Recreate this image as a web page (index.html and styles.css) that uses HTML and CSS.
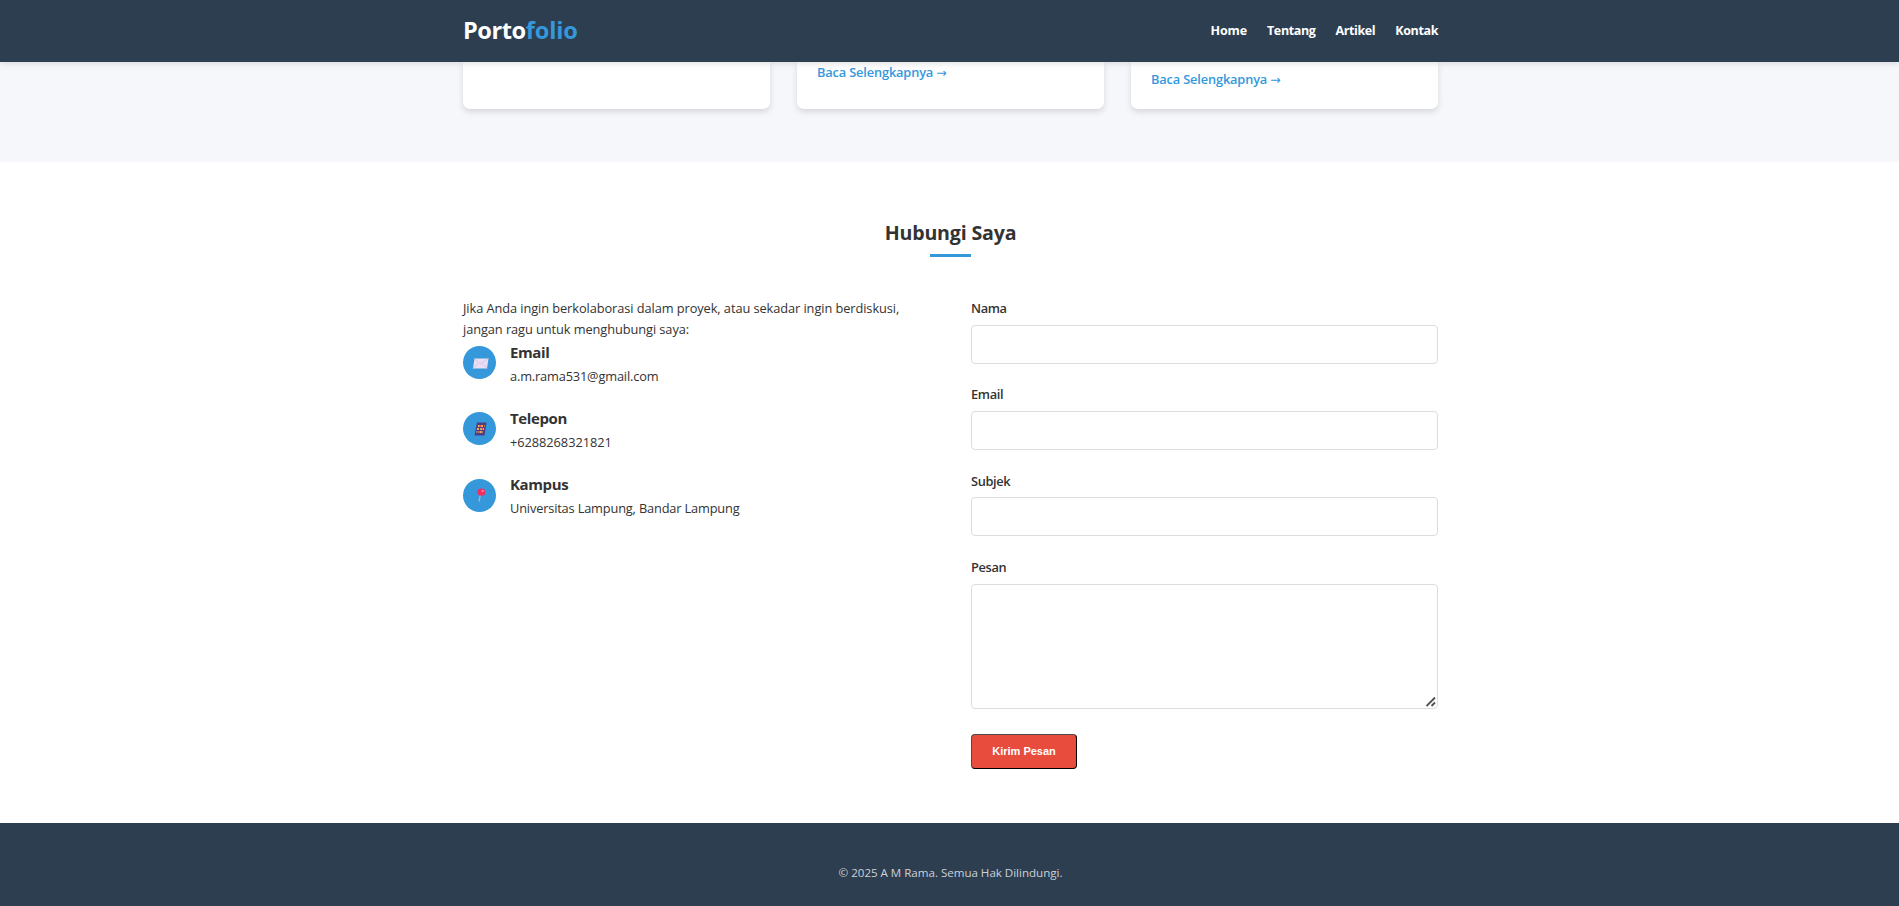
FILE: index.html
```html
<!DOCTYPE html>
<html lang="id">
<head>
<meta charset="utf-8">
<title>Portofolio</title>
<link rel="stylesheet" href="styles.css">
</head>
<body>
<header class="header">
  <div class="container header-inner">
    <a class="logo">Porto<span class="accent">folio</span></a>
    <nav class="nav"><a class="nav-home">Home</a><a>Tentang</a><a>Artikel</a><a>Kontak</a></nav>
  </div>
</header>
<section class="articles">
  <div class="container cards">
    <article class="card"></article>
    <article class="card"><a class="more">Baca Selengkapnya <span class="arrow">→</span></a></article>
    <article class="card card-low"><a class="more">Baca Selengkapnya <span class="arrow">→</span></a></article>
  </div>
</section>
<section class="contact">
  <div class="container">
    <h2 class="title">Hubungi Saya</h2>
    <div class="columns">
      <div class="info">
        <p class="intro">Jika Anda ingin berkolaborasi dalam proyek, atau sekadar ingin berdiskusi,<br>jangan ragu untuk menghubungi saya:</p>
        <div class="item">
          <div class="badge"><svg width="18" height="14" viewBox="0 0 18 14"><path d="M3.500 2.500H17.500L16 12.500H2Z" fill="#e9def3"/><path d="M3.500 2.500L9 8L17.500 2.500M2 12.500L7 7.500M16 12.500L11.500 7.500" fill="none" stroke="#cfc0df" stroke-width=".7"/></svg></div>
          <div><h3>Email</h3><p>a.m.rama531@gmail.com</p></div>
        </div>
        <div class="item">
          <div class="badge"><svg width="18" height="14" viewBox="0 0 18 14"><path d="M6 0.500H15.500L13.500 13.500H3.500Z" fill="#533b86"/><path d="M7 4H13.500M6 7H13M5.500 10H12" stroke="#f0b04a" stroke-width="1.800" stroke-dasharray="2 1"/><path d="M8.500 4h1.500M11 7h1M6 10h1" stroke="#e8433f" stroke-width="1.800"/><path d="M9.500 7h1M10 10h1" stroke="#5fb0e8" stroke-width="1.800"/></svg></div>
          <div><h3>Telepon</h3><p class="phone">+6288268321821</p></div>
        </div>
        <div class="item">
          <div class="badge"><svg width="18" height="14" viewBox="0 0 18 14"><path d="M9.300 7L8 13.500" stroke="#a9b4c4" stroke-width="1.300"/><ellipse cx="10.300" cy="4.200" rx="4" ry="3.600" fill="#ee2f63"/><circle cx="11.700" cy="3" r="1.100" fill="#ff8fb0"/></svg></div>
          <div><h3>Kampus</h3><p>Universitas Lampung, Bandar Lampung</p></div>
        </div>
      </div>
      <form class="form">
        <div class="field"><label for="nama">Nama</label><input id="nama" type="text"></div>
        <div class="field"><label for="email">Email</label><input id="email" type="text"></div>
        <div class="field"><label for="subjek">Subjek</label><input id="subjek" type="text"></div>
        <div class="field message"><label for="pesan">Pesan</label><textarea id="pesan"></textarea>
          <svg class="grip" width="10" height="10" viewBox="0 0 10 10"><path d="M.5 9L9 .5M5.500 9L9 5.500" stroke="#505050" stroke-width="1.900"/></svg></div>
        <button type="button" class="send">Kirim Pesan</button>
      </form>
    </div>
  </div>
</section>
<footer class="footer">© 2025 A M Rama. Semua Hak Dilindungi.</footer>
</body>
</html>
```
FILE: styles.css
```css
* { box-sizing: border-box; margin: 0; padding: 0; }
body { font-family: "Open Sans", "Noto Sans", sans-serif; font-size: 12.8px; line-height: 21.33px; color: #333; background: #fff; height: 906px; overflow: hidden; display: flex; flex-direction: column; }
.container { width: 975px; margin-left: 463px; }
.header { height: 62px; flex: none; background: #2d3e50; position: relative; z-index: 2; box-shadow: 0 1px 7px rgba(0,0,0,.14); }
.header-inner { height: 62px; display: flex; align-items: center; justify-content: space-between; }
.logo { font-size: 23.600px; font-weight: 700; color: #fff; line-height: 38px; letter-spacing: -.45px; padding-bottom: 2px; }
.accent { color: #3498db; letter-spacing: -.15px; }
.nav { display: flex; gap: 20px; color: #fff; font-weight: 700; font-size: 12.500px; letter-spacing: -.38px; }
.nav-home { letter-spacing: -.1px; }
.articles { height: 100px; flex: none; background: #f5f7fb; }
.cards { display: grid; grid-template-columns: repeat(3, 307px); gap: 27px; }
.card { height: 47px; background: #fff; border-radius: 0 0 7px 7px; padding-left: 20px; box-shadow: 0 3px 6px rgba(0,0,0,.13); }
.more { display: block; color: #3498db; font-weight: 600; letter-spacing: -.15px; }
.arrow { font: 12.500px/1 "DejaVu Sans", sans-serif; }
.card-low { padding-top: 7px; }
.contact { height: 661px; flex: none; padding-top: 54px; }
.title { font-size: 19.600px; line-height: 34px; font-weight: 700; text-align: center; letter-spacing: -.17px; }
.title::after { content: ""; display: block; width: 41px; height: 3px; margin: 4px auto 0; background: #3498db; }
.columns { display: grid; grid-template-columns: 467px 467px; gap: 41px; margin-top: 41px; }
.intro { letter-spacing: -.075px; }
.item { display: flex; gap: 14px; height: 66.200px; }
.badge { width: 33px; height: 33px; border-radius: 50%; background: #3498db; display: flex; align-items: center; justify-content: center; margin-top: 5.500px; }
.item h3 { font-size: 15px; line-height: 22px; font-weight: 700; letter-spacing: -.38px; }
.item p { margin-top: 3px; letter-spacing: -.165px; }
.item .phone { letter-spacing: -.05px; }
.field { margin-bottom: 20.630px; }
.field label { display: block; font-weight: 600; line-height: 21px; margin-bottom: 5.700px; letter-spacing: -.36px; }
.field input, .field textarea { display: block; width: 467px; height: 39px; border: 1px solid #ddd; border-radius: 4px; background: #fff; }
.field textarea { height: 125px; resize: none; }
.message { position: relative; margin-bottom: 25px; }
.grip { position: absolute; right: 2px; bottom: 2px; }
.send { display: block; width: 106px; height: 35px; border: 1px solid; border-color: #4c4c4c #000 #000 #4c4c4c; border-radius: 4px; background: #e74c3c; color: #fff; font: 700 11px "Liberation Sans", Arial, sans-serif; }
.footer { flex: 1; background: #2d3e50; color: #ccd1d6; text-align: center; padding: 39px 0 0 2px; font-size: 11.600px; letter-spacing: -.03px; }
```
